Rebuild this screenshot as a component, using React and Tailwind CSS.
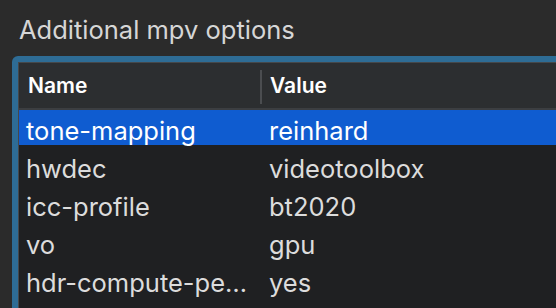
import React from 'react';

const options = [
  { name: 'tone-mapping', value: 'reinhard' },
  { name: 'hwdec', value: 'videotoolbox' },
  { name: 'icc-profile', value: 'bt2020' },
  { name: 'vo', value: 'gpu' },
  { name: 'hdr-compute-pe\u2026', value: 'yes' },
];

export default function App() {
  const selected = 0;

  return (
    <div
      className="w-[556px] h-[308px] overflow-hidden bg-[#2b2b2b]"
      style={{ fontFamily: 'Inter, "Liberation Sans", sans-serif' }}
    >
      <div className="pl-[19px] pt-[15px] text-[25.5px] leading-[30px] text-[#d6d6d6] whitespace-nowrap">
        Additional mpv options
      </div>

      <div className="mt-[11px] ml-[12px] w-[600px] h-[300px] rounded-[6px] bg-[#2e6c95] p-[6px]">
        <div className="h-full border border-[#45484b] bg-[#1f2022]">
          <div className="flex h-[47px] bg-[#2c2e30] border-b-2 border-[#3c3e41]">
            <div className="w-[241px] pl-[9px] pt-[11px] text-[21px] leading-[24px] font-semibold text-white">
              Name
            </div>
            <div className="w-[2px] mt-[7px] h-[34px] bg-[#4b4d50]" />
            <div className="flex-1 pl-[8px] pt-[11px] text-[21px] leading-[24px] font-semibold text-white">
              Value
            </div>
          </div>

          {options.map((opt, i) => (
            <div key={opt.name} className="h-[38px]">
              <div
                className={`flex h-[35px] text-[25.5px] leading-[29px] pt-[6px] whitespace-nowrap ${
                  i === selected ? 'bg-[#0f5cd0] text-white' : 'text-[#dcdcdc]'
                }`}
              >
                <div className="w-[243px] pl-[7px]">{opt.name}</div>
                <div className="flex-1 pl-[7px]">{opt.value}</div>
              </div>
            </div>
          ))}
        </div>
      </div>
    </div>
  );
}
